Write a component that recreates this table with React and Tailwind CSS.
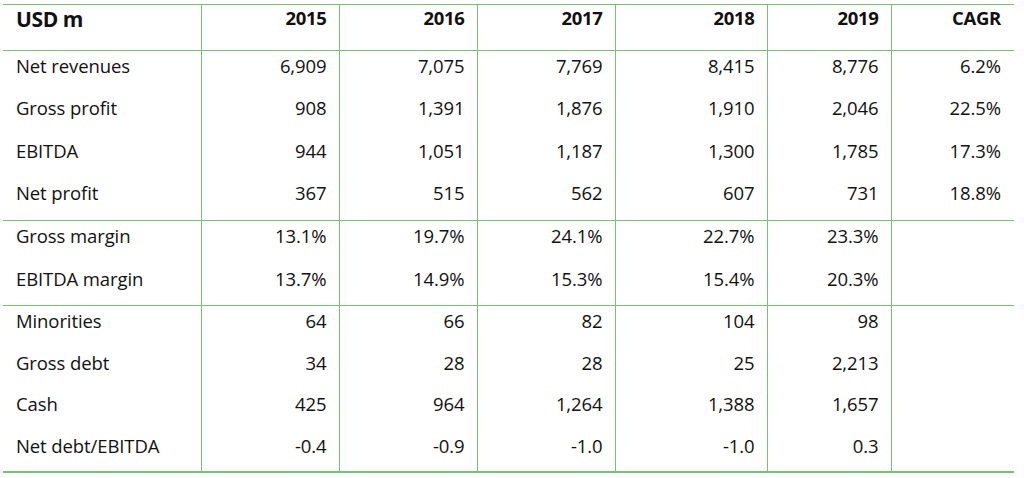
import React from "react";

const sections = [
  [
    ["Net revenues", "6,909", "7,075", "7,769", "8,415", "8,776", "6.2%"],
    ["Gross profit", "908", "1,391", "1,876", "1,910", "2,046", "22.5%"],
    ["EBITDA", "944", "1,051", "1,187", "1,300", "1,785", "17.3%"],
    ["Net profit", "367", "515", "562", "607", "731", "18.8%"],
  ],
  [
    ["Gross margin", "13.1%", "19.7%", "24.1%", "22.7%", "23.3%", ""],
    ["EBITDA margin", "13.7%", "14.9%", "15.3%", "15.4%", "20.3%", ""],
  ],
  [
    ["Minorities", "64", "66", "82", "104", "98", ""],
    ["Gross debt", "34", "28", "28", "25", "2,213", ""],
    ["Cash", "425", "964", "1,264", "1,388", "1,657", ""],
    ["Net debt/EBITDA", "-0.4", "-0.9", "-1.0", "-1.0", "0.3", ""],
  ],
];

const heights = [
  [42, 43, 42, 43],
  [43, 42],
  [42, 41, 42, 41],
];

const widths = [198, 138, 138, 138, 152, 124, 123];

export default function App() {
  return (
    <div className="w-[1024px] h-[478px] bg-white pt-[4px] pl-[3px] text-[#111111] font-['Open_Sans',sans-serif] overflow-hidden">
      <table className="table-fixed border-collapse w-[1011px]">
        <colgroup>
          {widths.map((w, i) => (
            <col key={i} style={{ width: w }} />
          ))}
        </colgroup>
        <thead>
          <tr className="h-[46px] border-t border-b border-[#74c274]">
            <th className="align-top text-left pl-[13px] pt-0 text-[21px] leading-[28px] font-bold tracking-[-0.4px]">USD m</th>
            {["2015", "2016", "2017", "2018", "2019", "CAGR"].map((y, i) => (
              <th
                key={y}
                className={`align-top text-right pt-0 text-[18.5px] leading-[26px] font-bold tracking-[-0.3px] border-l border-[#74c274] ${i === 5 ? "pr-[13px]" : "pr-[12px]"}`}
              >
                {y}
              </th>
            ))}
          </tr>
        </thead>
        {sections.map((rows, si) => (
          <tbody
            key={si}
            className={si === 2 ? "border-b-2 border-[#74c274]" : "border-b border-[#74c274]"}
          >
            {rows.map((r, ri) => (
              <tr key={ri} style={{ height: heights[si][ri] }}>
                {r.map((c, ci) => (
                  <td
                    key={ci}
                    className={
                      ci === 0
                        ? "align-top text-left pl-[13px] pt-[3px] text-[18.5px] leading-[24px] tracking-[-0.1px] whitespace-nowrap"
                        : `align-top text-right pt-[3px] text-[18.5px] leading-[24px] tracking-[-0.1px] border-l border-[#74c274] ${ci === 6 ? "pr-[13px]" : "pr-[12px]"}`
                    }
                  >
                    {c}
                  </td>
                ))}
              </tr>
            ))}
          </tbody>
        ))}
      </table>
    </div>
  );
}
